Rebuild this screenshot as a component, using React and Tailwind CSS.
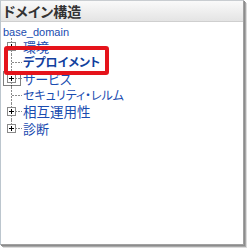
import React from "react";

const jp = {
  fontFamily: '"Noto Sans CJK JP", "Noto Sans", sans-serif',
  fontFeatureSettings: '"palt"',
};

// connector lines for one row of the tree
const Connector = ({ h, last, box, focus }) => {
  const c = Math.floor(h / 2) + 0.5;
  return (
    <svg width="22" height={h} className="shrink-0 block">
      <line
        x1="10.5"
        y1="0"
        x2="10.5"
        y2={last ? c : h}
        stroke="#8a8a8a"
        strokeDasharray="2 1"
      />
      <line x1="11" y1={c} x2="21" y2={c} stroke="#8a8a8a" strokeDasharray="2 1" />
      {box && (
        <>
          <rect x="6.5" y={c - 4} width="8" height="8" fill="#fff" stroke="#8a8a8a" />
          <line x1="8" y1={c} x2="13" y2={c} stroke="#000" />
          <line x1="10.5" y1={c - 2.5} x2="10.5" y2={c + 2.5} stroke="#000" />
        </>
      )}
      {focus && (
        <rect
          x="2.5"
          y="1.5"
          width="17"
          height={h - 3}
          fill="none"
          stroke="#000"
          strokeDasharray="1 1"
        />
      )}
    </svg>
  );
};

const rows = [
  { label: "環境", h: 16, box: true, size: "text-[13px]" },
  { label: "デプロイメント", h: 16, bold: true, size: "text-[12px]" },
  { label: "サービス", h: 17, box: true, focus: true, size: "text-[13px]" },
  { label: "セキュリティ・レルム", h: 16, size: "text-[12px]" },
  { label: "相互運用性", h: 17, box: true, size: "text-[13.5px]" },
  { label: "診断", h: 16, box: true, last: true, size: "text-[13px]" },
];

export default function App() {
  return (
    <div className="relative w-[248px] h-[248px] bg-white overflow-hidden">
      <div className="w-[244px] h-[245px] border-l border-t border-l-[#bcc6ce] border-t-[#c9cdd1] border-r border-b border-r-[#a0a0a0] border-b-[#a0a0a0] shadow-[1px_1px_0_#8c8c8c,2px_2px_0_#a8a8a8,3px_3px_0_#dcdcdc] bg-white flex flex-col">
        <div
          className="h-[21px] shrink-0 border-b border-[#cfcfcf] bg-gradient-to-b from-[#fafafa] to-[#e4e4e4] pl-[2px] flex items-center text-[14px] font-bold text-[#333] leading-none"
          style={jp}
        >
          ドメイン構造
        </div>
        <div className="flex flex-col">
          <div
            className="h-[16px] pl-[2px] flex items-end text-[11px] leading-none text-[#1a4cb0]"
            style={{ fontFamily: '"Liberation Sans", Arial, sans-serif' }}
          >
            base_domain
          </div>
          {rows.map((r) => (
            <div key={r.label} className="flex items-center" style={{ height: r.h }}>
              <Connector h={r.h} last={r.last} box={r.box} focus={r.focus} />
              <span
                className={`leading-none whitespace-nowrap ${r.size} ${
                  r.bold ? "font-bold text-[#123f9e]" : "text-[#1a4cb0]"
                }`}
                style={jp}
              >
                {r.label}
              </span>
            </div>
          ))}
        </div>
      </div>
      {/* red highlight drawn over the tree */}
      <div className="absolute left-[4px] top-[46px] w-[105px] h-[29px] border-4 border-[#e5131b] rounded-[3px]" />
    </div>
  );
}
